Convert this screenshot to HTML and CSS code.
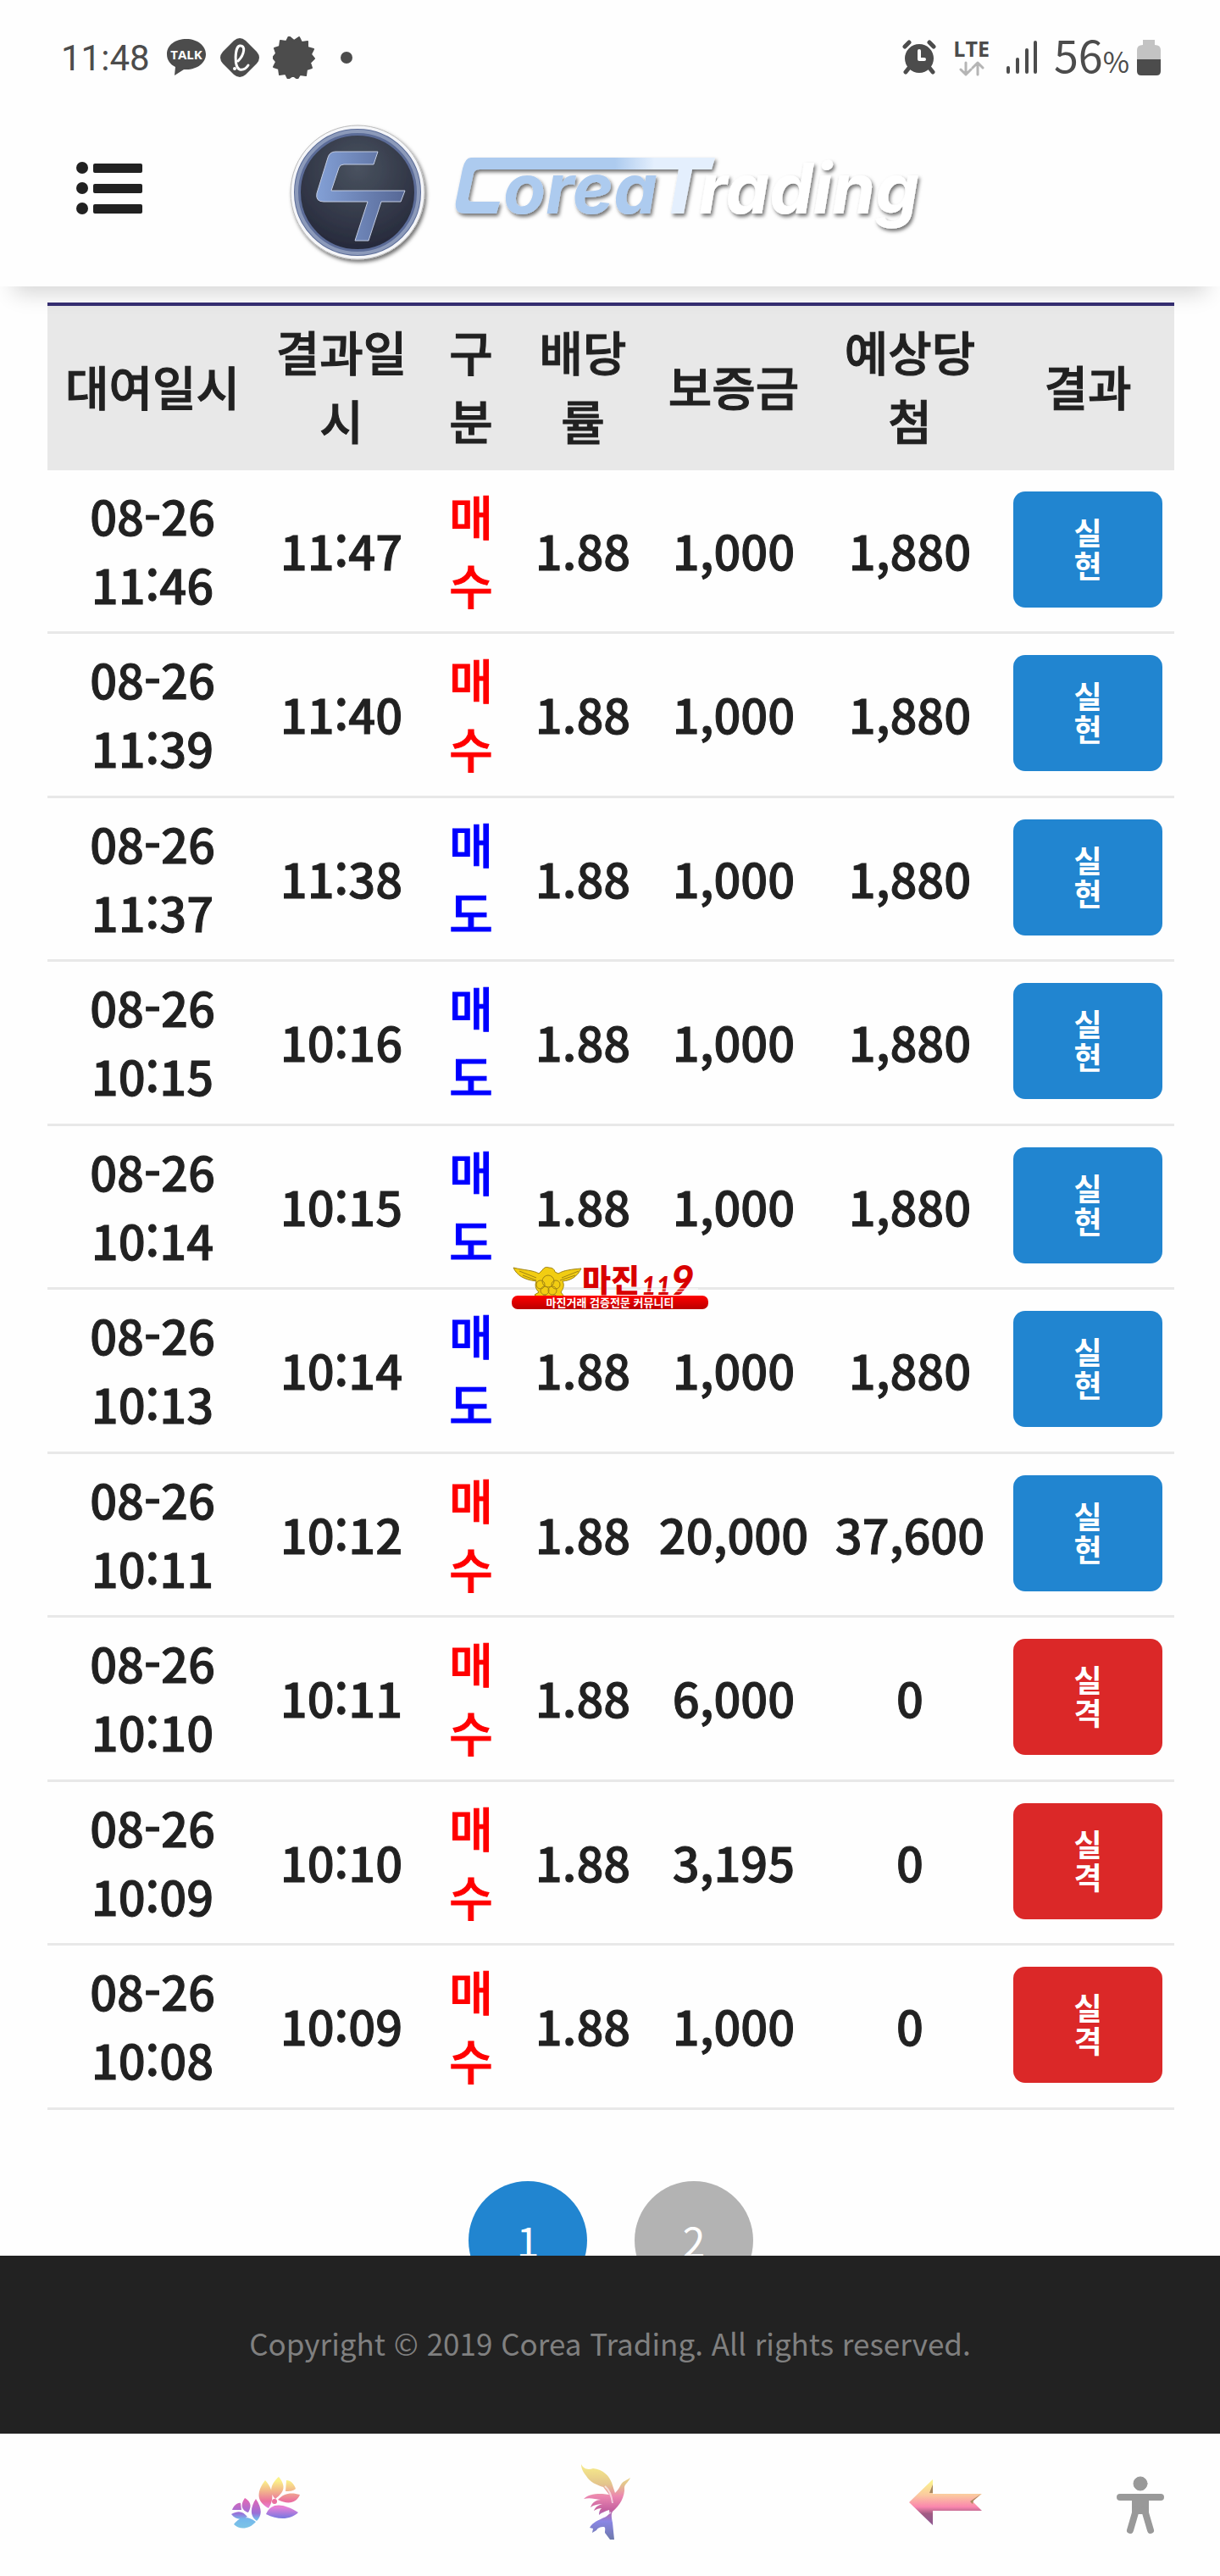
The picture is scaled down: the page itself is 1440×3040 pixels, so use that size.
FILE: index.html
```html
<!DOCTYPE html>
<html lang="ko">
<head>
    <meta charset="UTF-8">
    <title>Corea Trading</title>
    <link rel="stylesheet" href="styles.css">
</head>
<body>
    <div class="status-bar">
        <span class="clock">11:48</span>
        <svg class="status-icon" width="48" height="48" viewBox="0 0 48 48"><path fill="#4c4c4c" d="M24 2C11 2 1 9 1 20c0 7 4 12 10 15l-1 10 11-7h3c13 0 23-8 23-18S37 2 24 2z"/><text class="talk" x="24" y="26">TALK</text></svg>
        <svg class="status-icon" width="48" height="48" viewBox="0 0 48 48"><path fill="#4c4c4c" d="M17 4q7-6 14 0l13 13q6 7 0 14L31 44q-7 6-14 0L4 31q-6-7 0-14z"/><path fill="none" stroke="#fff" stroke-width="3" stroke-linecap="round" d="M22 28C30 20 31 9 24 10c-6 1-7 26 0 28 5 1 8-2 10-5"/><circle cx="18" cy="37" r="2" fill="#fff"/></svg>
        <svg class="status-icon" width="50" height="50" viewBox="0 0 50 50"><path fill="#4c4c4c" stroke="#4c4c4c" stroke-linejoin="round" stroke-width="2" d="M25 5l6-4 3 6 7-1v7l7 2-3 6 4 5-5 5 2 6-6 2-1 7-7-1-3 5-5-4-6 4-3-6-7 1-1-7-6-2 3-6-4-5 4-5-2-6 6-2 1-7 7 1 3-6z"/></svg>
        <span class="dot"></span>
        <div class="status-right">
            <svg width="42" height="42" viewBox="0 0 42 42"><g fill="none" stroke="#4c4c4c" stroke-width="5" stroke-linecap="round"><path d="M4 8l5-5M38 8l-5-5M9 33l-4 5M33 33l4 5"/></g><circle cx="21" cy="22" r="17" fill="#4c4c4c"/><path fill="none" stroke="#fff" stroke-width="4" stroke-linecap="round" stroke-linejoin="round" d="M21 13v10h6"/></svg>
            <div class="network">
                <span>LTE</span>
                <svg width="30" height="18" viewBox="0 0 30 18"><path fill="none" stroke="#b5b5b5" stroke-width="3" stroke-linecap="round" stroke-linejoin="round" d="M8 2v14M2 10l6 6 6-6M22 16V2M16 8l6-6 6 6"/></svg>
            </div>
            <svg width="38" height="42" viewBox="0 0 38 42"><path fill="none" stroke="#4c4c4c" stroke-width="4" stroke-linecap="round" d="M3 33v5M14 23v15M25 12v26M35 3v35"/></svg>
            <span class="battery-text">56<small>%</small></span>
            <svg width="28" height="44" viewBox="0 0 28 44"><path fill="#c3c3c3" d="M7 1h14v6q7 0 7 6v12H0V13q0-6 7-6z"/><path fill="#4c4c4c" d="M0 24h28v14q0 5-5 5H5q-5 0-5-5z"/></svg>
        </div>
    </div>

    <header class="header">
        <button class="menu" aria-label="메뉴">
            <svg width="78" height="64" viewBox="0 0 78 64" fill="#212121"><circle cx="7" cy="8" r="7"/><circle cx="7" cy="32" r="7"/><circle cx="7" cy="56" r="7"/><rect x="20" y="3" width="58" height="11" rx="2"/><rect x="20" y="27" width="58" height="11" rx="2"/><rect x="20" y="51" width="58" height="11" rx="2"/></svg>
        </button>
        <a class="logo" href="#" aria-label="Corea Trading">
            <svg width="780" height="180" viewBox="0 0 780 180">
                <defs>
                    <radialGradient id="face" cx="50%" cy="30%" r="70%"><stop offset="0" stop-color="#49525f"/><stop offset="1" stop-color="#25283a"/></radialGradient>
                    <linearGradient id="steel"><stop offset="0" stop-color="#83a0d6"/><stop offset="1" stop-color="#566795"/></linearGradient>
                    <linearGradient id="bar" gradientUnits="userSpaceOnUse" x1="200" x2="510" y1="0" y2="0"><stop offset="0" stop-color="#adcbef"/><stop offset="0.6" stop-color="#adcbef"/><stop offset="0.75" stop-color="#e4effd"/></linearGradient>
                    <filter id="drop" x="-10%" y="-10%" width="125%" height="130%"><feDropShadow dx="2" dy="3" stdDeviation="2" flood-color="#000" flood-opacity="0.55"/></filter>
                </defs>
                <g filter="url(#drop)">
                    <circle cx="82" cy="87" r="79" fill="#f5f6f9" stroke="#bbb"/>
                    <circle cx="82" cy="87" r="71" fill="url(#face)" stroke="#5b6c98" stroke-width="8"/>
                    <circle cx="82" cy="87" r="72" fill="none" stroke="#8c9aba" stroke-width="4"/>
                </g>
                <path fill="url(#steel)" stroke="#c4cde2" d="M106 39l-5 15H66q-5 0-6 4l-9 27h87l-5 13h-23l-15 46H79l15-46H42q-10 0-8-10L47 46q2-7 9-7z"/>
                <g filter="url(#drop)">
                    <path fill="url(#bar)" d="M216 46h288l-4 14h-23l-10 52h-15l9-52H226q-6 0-7 5l-6 28q-1 5 4 5h33l-4 14h-37q-13 0-11-14l8-39q3-13 10-13z"/>
                    <text class="logo-text corea" x="254" y="112">orea</text>
                    <text class="logo-text trading" x="485" y="112">rading</text>
                </g>
            </svg>
        </a>
    </header>

    <main class="content">
        <table class="trades">
            <colgroup>
                <col class="c-rent"><col class="c-end"><col class="c-type"><col class="c-rate"><col class="c-deposit"><col class="c-expect"><col class="c-result">
            </colgroup>
            <thead>
                <tr><th>대여일시</th><th>결과일시</th><th>구분</th><th>배당률</th><th>보증금</th><th>예상당첨</th><th>결과</th></tr>
            </thead>
            <tbody>
                <tr><td>08-26 11:46</td><td>11:47</td><td class="buy">매수</td><td>1.88</td><td>1,000</td><td>1,880</td><td><button class="result win">실현</button></td></tr>
                <tr><td>08-26 11:39</td><td>11:40</td><td class="buy">매수</td><td>1.88</td><td>1,000</td><td>1,880</td><td><button class="result win">실현</button></td></tr>
                <tr><td>08-26 11:37</td><td>11:38</td><td class="sell">매도</td><td>1.88</td><td>1,000</td><td>1,880</td><td><button class="result win">실현</button></td></tr>
                <tr><td>08-26 10:15</td><td>10:16</td><td class="sell">매도</td><td>1.88</td><td>1,000</td><td>1,880</td><td><button class="result win">실현</button></td></tr>
                <tr><td>08-26 10:14</td><td>10:15</td><td class="sell">매도</td><td>1.88</td><td>1,000</td><td>1,880</td><td><button class="result win">실현</button></td></tr>
                <tr><td>08-26 10:13</td><td>10:14</td><td class="sell">매도</td><td>1.88</td><td>1,000</td><td>1,880</td><td><button class="result win">실현</button></td></tr>
                <tr><td>08-26 10:11</td><td>10:12</td><td class="buy">매수</td><td>1.88</td><td>20,000</td><td>37,600</td><td><button class="result win">실현</button></td></tr>
                <tr><td>08-26 10:10</td><td>10:11</td><td class="buy">매수</td><td>1.88</td><td>6,000</td><td>0</td><td><button class="result lose">실격</button></td></tr>
                <tr><td>08-26 10:09</td><td>10:10</td><td class="buy">매수</td><td>1.88</td><td>3,195</td><td>0</td><td><button class="result lose">실격</button></td></tr>
                <tr><td>08-26 10:08</td><td>10:09</td><td class="buy">매수</td><td>1.88</td><td>1,000</td><td>0</td><td><button class="result lose">실격</button></td></tr>
            </tbody>
        </table>
        <nav class="pagination">
            <a class="active" href="#">1</a>
            <a href="#">2</a>
        </nav>
    </main>

    <footer class="footer">Copyright © 2019 Corea Trading. All rights reserved.</footer>

    <nav class="bottom-nav">
        <a href="#" aria-label="최근 앱">
            <svg width="84" height="64" viewBox="0 0 84 64">
                <defs>
                    <linearGradient id="petal" gradientUnits="userSpaceOnUse" x1="0" y1="2" x2="0" y2="50"><stop offset="0.1" stop-color="#fbf18a"/><stop offset="0.35" stop-color="#f2b48c"/><stop offset="0.6" stop-color="#ea6f9f"/><stop offset="0.75" stop-color="#e680d8"/><stop offset="1" stop-color="#7d78e0"/></linearGradient>
                    <linearGradient id="leaf" gradientUnits="userSpaceOnUse" x1="0" y1="28" x2="0" y2="62"><stop offset="0" stop-color="#e468b4"/><stop offset="0.5" stop-color="#9a6fd8"/><stop offset="0.7" stop-color="#74b8ec"/><stop offset="1" stop-color="#7cc4e6"/></linearGradient>
                </defs>
                <path fill="url(#petal)" d="M41 6c11 12 10 24 4 33-15-8-14-20-4-33zM57 2c8 10 8 17-4 26-9-9-4-19 4-26zM66 6c5 0 9 4 11 10-3 3-8 3-12 3zM56 29c7-8 16-9 26-6-4 10-14 12-26 6zM42 46c6-14 20-13 38-2-9 9-24 9-38 2z"/>
                <circle cx="52" cy="31" r="3" fill="#ea6f9f"/>
                <path fill="url(#leaf)" d="M30 28c8 12 7 20 1 26-9-6-7-17-1-26zM17 27c9 5 7 12 4 17-9-3-9-10-4-17zM2 41c2-5 6-9 10-8l1 8zM1 46c9-5 14-3 19 3-7 4-14 4-19-3zM4 58c8-10 16-10 26-3-8 9-19 10-26 3z"/>
            </svg>
        </a>
        <a href="#" aria-label="홈">
            <svg width="58" height="90" viewBox="0 0 58 90">
                <defs><linearGradient id="bird" gradientUnits="userSpaceOnUse" x1="0" y1="0" x2="0" y2="90"><stop offset="0.05" stop-color="#f4e68a"/><stop offset="0.26" stop-color="#e3c58c"/><stop offset="0.42" stop-color="#ec87b0"/><stop offset="0.6" stop-color="#c4619f"/><stop offset="0.75" stop-color="#8a86e4"/><stop offset="1" stop-color="#6c78a8"/></linearGradient></defs>
                <path fill="url(#bird)" d="M0 0c3 6 8 7 14 5 12 1 19 9 22 17l4 12c3-3 5-6 7-10 2-4 7-5 11-8-2 5-6 7-7 11 1 12-6 22-14 29-2 3-1 8 0 13l2 20h-5l-6-8c0-3 1-6-1-7-5 0-7 1-9 4l-5 3 1-5-4-1c4-7 11-9 17-12 5-2 7-5 6-9-5 2-9 3-12 6 0-4 1-6 3-8-3 0-6 1-9 3 2-5 6-7 10-8-5 0-10 1-14 4 2-6 7-9 12-9-7-1-13-3-20-1 6-6 15-6 22-6l8 1-7-9C19 25 10 21 6 14 3 10 0 6 0 0z"/>
                <path fill="none" stroke="#fff" stroke-width="2" stroke-opacity="0.6" d="M28 26c6 5 8 12 9 20M26 62l9-5"/>
            </svg>
        </a>
        <a href="#" aria-label="뒤로">
            <svg width="86" height="56" viewBox="0 0 86 56">
                <defs><linearGradient id="arrow" x1="0" y1="0" x2="0" y2="1"><stop offset="0.05" stop-color="#fbf28d"/><stop offset="0.35" stop-color="#fbc8a0"/><stop offset="0.6" stop-color="#fa86ad"/><stop offset="0.75" stop-color="#a25b83"/><stop offset="1" stop-color="#8a5790"/></linearGradient></defs>
                <path fill="url(#arrow)" d="M0 28L28 1v17h58L75 27l11 11H28v17z"/>
                <path fill="#a9895f" d="M28 7v10h-4zM85 18L72 27l3 3 1-4z"/>
            </svg>
        </a>
        <a class="access" href="#" aria-label="접근성">
            <svg width="56" height="68" viewBox="0 0 56 68" fill="#999" stroke="#999" stroke-linecap="round" stroke-linejoin="round"><circle cx="28" cy="9" r="8"/><path stroke-width="8" d="M4 25h48"/><path stroke-width="4" d="M20 25h16v18H20z"/><path fill="none" stroke-width="8" d="M23 40l-7 24M33 40l7 24"/></svg>
        </a>
    </nav>

    <svg class="watermark" width="234" height="58" viewBox="0 0 234 58">
        <defs>
            <linearGradient id="red" x1="0" y1="0" x2="0" y2="1"><stop offset="0" stop-color="#f00"/><stop offset="1" stop-color="#b00"/></linearGradient>
        </defs>
        <path fill="#f2cd12" stroke="#a08312" d="M3 4c12 3 24 3 30 7l4-4q3-5 8-3 6 0 7 5l4 2c6-4 16-5 27-6-5 10-12 14-22 15 3 5 0 10-2 13l4 5-6 2-5-4q-7 5-12 0l-7 4-5-4 5-3q-6-6-3-13C15 18 7 13 3 4z"/>
        <g fill="none" stroke="#a08312"><circle cx="44" cy="20" r="7"/><circle cx="35" cy="24" r="5"/><circle cx="53" cy="24" r="5"/><circle cx="40" cy="31" r="5"/><circle cx="49" cy="31" r="5"/><path d="M10 8l20 8M14 13l16 6M80 8l-20 8M76 13l-18 6"/></g>
        <text class="mark-name" x="84" y="33">마진</text>
        <text class="mark-number" x="154" y="36">11<tspan class="mark-nine">9</tspan></text>
        <path stroke="#fff" d="M153 29h68M153 32h68"/>
        <rect x="1" y="37" width="232" height="16" rx="7" fill="url(#red)"/>
        <text class="mark-sub" x="117" y="50">마진거래 검증전문 커뮤니티</text>
    </svg>
</body>
</html>
```
FILE: styles.css
```css
* {
    box-sizing: border-box;
}
body {
    margin: 0;
    height: 100vh;
    display: flex;
    flex-direction: column;
    position: relative;
    overflow: hidden;
    background: #fefefe;
    color: #212121;
    font-family: 'Noto Sans CJK KR', sans-serif;
}
button {
    border: none;
    font-family: inherit;
    cursor: pointer;
}
a {
    color: inherit;
    text-decoration: none;
}
svg {
    display: block;
}

/* status bar */
.status-bar {
    display: flex;
    align-items: center;
    flex-shrink: 0;
    height: 136px;
    padding: 0 70px 0 72px;
    color: #4c4c4c;
}
.clock {
    width: 108px;
    margin-right: 16px;
    font-size: 42px;
    font-family: 'Roboto', sans-serif;
    white-space: nowrap;
}
.status-icon {
    margin-right: 15px;
}
.talk {
    fill: #fff;
    font: bold 15px 'Open Sans', sans-serif;
    text-anchor: middle;
}
.dot {
    width: 14px;
    height: 14px;
    margin-left: 15px;
    border-radius: 50%;
    background: #4c4c4c;
}
.status-right {
    display: flex;
    align-items: center;
    gap: 19px;
    margin-left: auto;
}
.network {
    display: flex;
    flex-direction: column;
    align-items: center;
    gap: 4px;
    font: bold 25px/22px 'Open Sans', sans-serif;
}
.battery-text {
    margin-right: -10px;
    font-size: 52px;
    line-height: 60px;
}
.battery-text small {
    font-size: 34px;
}

/* header */
.header {
    display: flex;
    align-items: center;
    flex-shrink: 0;
    height: 202px;
    padding: 0 90px;
    background: #fefefe;
    box-shadow: 0 24px 24px -16px rgba(0, 0, 0, 0.16);
    position: relative;
    z-index: 1;
}
.menu {
    padding: 0;
    background: none;
    margin-bottom: 30px;
}
.logo {
    margin-bottom: 14px;
    margin-left: 172px;
}
.logo-text {
    font: italic bold 82px 'Inter', sans-serif;
    font-feature-settings: 'cv11';
}
.corea {
    fill: #adcbef;
}
.trading {
    fill: #fff;
}

/* trade list */
.content {
    flex: 1;
    min-height: 0;
    padding: 19px 54px 0 56px;
    overflow: hidden;
}
.trades {
    width: 100%;
    table-layout: fixed;
    border-collapse: separate;
    border-spacing: 0;
    border-top: 4px solid #362e72;
    font-size: 56px;
    font-weight: 500;
    line-height: 81px;
    text-align: center;
    -webkit-text-stroke: 1px currentColor;
}
.c-rent { width: 248px; }
.c-end { width: 198px; }
.c-type { width: 108px; }
.c-rate { width: 156px; }
.c-deposit { width: 200px; }
.c-expect { width: 216px; }
.c-result { width: 204px; }
.trades th {
    padding: 12px 14px 20px;
    background: #e8e8e8;
    font-weight: 500;
    word-break: break-all;
}
.trades td {
    padding: 12px 14px 16px;
    border-bottom: 3px solid #e8e8e8;
}
.trades td:nth-child(5), .trades td:nth-child(6) {
    padding-left: 0;
    padding-right: 0;
}
.trades tr:nth-child(even) td {
    padding-bottom: 17px;
}
.buy {
    color: #f00;
}
.sell {
    color: #00f;
}
.result {
    display: block;
    width: 100%;
    padding: 28px 68px 31px;
    border-radius: 14px;
    color: #fff;
    font-size: 36px;
    font-weight: bold;
    line-height: 39px;
    word-break: break-all;
    -webkit-text-stroke: 0;
}
.win {
    background: #2185d0;
}
.lose {
    background: #db2828;
}

.pagination {
    display: flex;
    justify-content: center;
    gap: 56px;
    margin-top: 84px;
}
.pagination a {
    width: 140px;
    height: 140px;
    border-radius: 50%;
    background: #b3b3b3;
    color: #fff;
    font-size: 48px;
    line-height: 138px;
    text-align: center;
}
.pagination .active {
    background: #2185d0;
}

/* bottom */
.footer {
    flex-shrink: 0;
    padding: 73px 20px 77px;
    background: #222;
    color: #808080;
    font-size: 35px;
    line-height: 60px;
    text-align: center;
}
.bottom-nav {
    display: grid;
    grid-template-columns: 1fr 1fr 1fr;
    align-items: center;
    justify-items: center;
    flex-shrink: 0;
    height: 168px;
    padding: 0 124px 6px 114px;
    position: relative;
}
.access {
    position: absolute;
    right: 66px;
}
.watermark {
    position: absolute;
    top: 1492px;
    left: 603px;
}
.mark-name {
    fill: #d80000;
    font-size: 37px;
    font-weight: 900;
}
.mark-number {
    fill: #d80000;
    font: italic 900 30px 'Lato', sans-serif;
}
.mark-nine {
    font-size: 48px;
}
.mark-sub {
    fill: #fff;
    font-size: 13px;
    font-weight: bold;
    text-anchor: middle;
}
```
